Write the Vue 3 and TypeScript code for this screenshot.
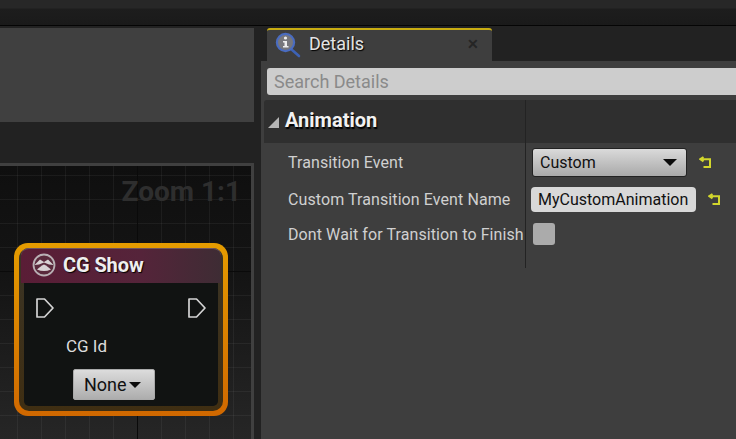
<script setup lang="ts">
const rows = [
  { label: 'Transition Event' },
  { label: 'Custom Transition Event Name' },
  { label: 'Dont Wait for Transition to Finish' },
]
</script>

<template>
  <div class="editor">
    <div class="topbar"></div>
    <div class="main">
      <div class="left">
        <div class="preview"></div>
        <div class="strip"></div>
        <div class="graph">
          <div class="zoom">Zoom 1:1</div>
          <div class="node">
            <div class="node-inner">
              <div class="node-head">
                <svg class="cg-icon" width="24" height="24" viewBox="0 0 24 24">
                  <circle cx="12" cy="12" r="10.5" fill="#5a2a3c" stroke="#b9b0b4" stroke-width="1.8" />
                  <path d="M2.5 12 L8 6.5 L12 9 L16 6.5 L21.5 12 L17 11.5 L12 9.5 L7 11.5 Z" fill="#d8d2d4" />
                  <path d="M5 16.5 Q8 14 10 12.5 L12 11.5 L14 12.5 Q16 14 19 16.5 Q12 19.5 5 16.5 Z" fill="#d8d2d4" />
                </svg>
                <span class="node-title">CG Show</span>
              </div>
              <div class="node-body">
                <div class="pins">
                  <svg width="20" height="22" viewBox="0 0 20 22"><path d="M2 2 H9.5 L18 11 L9.5 20 H2 Z" fill="none" stroke="#d4d4d4" stroke-width="1.7" stroke-linejoin="round" /></svg>
                  <svg width="20" height="22" viewBox="0 0 20 22"><path d="M2 2 H9.5 L18 11 L9.5 20 H2 Z" fill="none" stroke="#d4d4d4" stroke-width="1.7" stroke-linejoin="round" /></svg>
                </div>
                <div class="pin-label">CG Id</div>
                <div class="none-btn">None<span class="caret small"></span></div>
              </div>
            </div>
          </div>
        </div>
      </div>
      <div class="right">
        <div class="tabs">
          <div class="tab">
            <svg class="info-icon" width="26" height="26" viewBox="0 0 26 26">
              <path d="M16 17 L24 24" stroke="#3d62b5" stroke-width="2.6" stroke-linecap="round" />
              <circle cx="10.5" cy="10.5" r="8.6" fill="#77777c" stroke="#4a6cc0" stroke-width="2.2" />
              <circle cx="10.5" cy="6" r="1.6" fill="#eee" />
              <path d="M8 9 H12 V14 H13.5 V15.5 H8 V14 H9.5 V10.5 H8 Z" fill="#eee" />
            </svg>
            <span class="tab-title">Details</span>
            <span class="tab-close">✕</span>
          </div>
        </div>
        <div class="panel">
          <div class="search">Search Details</div>
          <div class="category">
            <div class="cat-left">
              <span class="tri"></span>
              <span class="cat-title">Animation</span>
            </div>
          </div>
          <div class="props">
            <div class="prop" v-for="(row, i) in rows" :key="row.label">
              <div class="prop-label">{{ row.label }}</div>
              <div class="prop-value">
                <template v-if="i === 0">
                  <div class="combo"><span>Custom</span><span class="caret"></span></div>
                  <svg class="reset" width="13" height="13" viewBox="0 0 13 13"><path d="M4.5 1 L1.2 3.2 L4.5 5.4 M1.5 3.2 H11 V11 H4.5" fill="none" stroke="#d2d62c" stroke-width="2" /></svg>
                </template>
                <template v-else-if="i === 1">
                  <div class="textbox">MyCustomAnimation</div>
                  <svg class="reset" width="13" height="13" viewBox="0 0 13 13"><path d="M4.5 1 L1.2 3.2 L4.5 5.4 M1.5 3.2 H11 V11 H4.5" fill="none" stroke="#d2d62c" stroke-width="2" /></svg>
                </template>
                <div v-else class="check"></div>
              </div>
            </div>
            <div class="prop-tail"></div>
          </div>
        </div>
      </div>
    </div>
  </div>
</template>

<style>
html, body { margin: 0; background: #222; overflow: hidden; }
</style>

<style scoped>
.editor {
  width: 736px;
  height: 439px;
  display: flex;
  flex-direction: column;
  font-family: Roboto, "Open Sans", sans-serif;
  background: #222;
  overflow: hidden;
}
.topbar {
  height: 25px;
  flex: none;
  background: linear-gradient(#272727 0, #272727 8px, #1d1d1d 9px, #1a1a1a 100%);
  border-bottom: 1px solid #050505;
}
.main { flex: 1; display: flex; min-height: 0; }
.left {
  width: 254px;
  flex: none;
  padding-top: 2px;
  display: flex;
  flex-direction: column;
}
.preview { height: 94px; background: #404040; flex: none; }
.strip { height: 41px; background: #222; flex: none; }
.graph {
  flex: 1;
  position: relative;
  border-top: 3px solid #404040;
  border-right: 3px solid #404040;
  background-image:
    linear-gradient(90deg, #0a0a0a 1px, transparent 1px),
    linear-gradient(#0a0a0a 1px, transparent 1px),
    linear-gradient(90deg, rgba(255, 255, 255, 0.05) 1px, transparent 1px),
    linear-gradient(rgba(255, 255, 255, 0.05) 1px, transparent 1px),
    linear-gradient(#0f0f0f 0, #141414 40%, #262626 100%);
  background-size: 192px 192px, 192px 192px, 24px 24px, 24px 24px, 100% 100%;
  background-position: 137px 0, 0 105px, 17px 0, 0 9px, 0 0;
}
.zoom {
  position: absolute;
  top: 9px;
  right: 10px;
  font-size: 28px;
  font-weight: 700;
  line-height: 34px;
  color: #2e2e2e;
}
.node {
  position: absolute;
  left: 14px;
  top: 77px;
  width: 214px;
  height: 173px;
  box-sizing: border-box;
  padding: 5px 5px;
  border-radius: 14px;
  background: linear-gradient(#e59c00, #d06800);
}
.node-inner {
  height: 100%;
  box-sizing: border-box;
  border-radius: 10px;
  background: linear-gradient(#3a3426, #3f2e12);
  padding: 0 2px 5px;
  display: flex;
  flex-direction: column;
}
.node-head {
  height: 35px;
  flex: none;
  display: flex;
  align-items: center;
  gap: 7px;
  padding: 0 0 2px 11px;
  border-radius: 8px 8px 0 0;
  background: linear-gradient(90deg, #5a1d36 0, #55243a 60%, #3e2c34 100%);
  border-top: 1px solid #6d5560;
  box-sizing: border-box;
}
.node-title {
  font-size: 20px;
  font-weight: 700;
  letter-spacing: -0.1px;
  color: #efefef;
  text-shadow: 1px 1px 1px #000;
}
.node-body {
  flex: 1;
  margin: 0 3px;
  background: #111312;
  border-radius: 0 0 5px 5px;
}
.pins {
  display: flex;
  justify-content: space-between;
  padding: 14px 11px 0 11px;
}
.pins svg { display: block; }
.pin-label {
  margin: 17px 0 0 42px;
  font-size: 17px;
  line-height: 20px;
  color: #ddd;
}
.none-btn {
  margin: 13px 0 0 49px;
  width: 82px;
  height: 31px;
  box-sizing: border-box;
  border-radius: 2px;
  border: 1px solid #aaa;
  background: linear-gradient(#dcdcdc, #adadad);
  color: #111;
  font-size: 18px;
  display: flex;
  align-items: center;
  padding-left: 10px;
  gap: 2px;
}
.caret {
  width: 0;
  height: 0;
  border-left: 7px solid transparent;
  border-right: 7px solid transparent;
  border-top: 7px solid #0c0c0c;
}
.caret.small {
  border-left-width: 6px;
  border-right-width: 6px;
  border-top-width: 6px;
}
.right {
  flex: 1;
  min-width: 0;
  padding-left: 7px;
  padding-top: 2px;
  display: flex;
  flex-direction: column;
}
.tabs { height: 33px; flex: none; padding-left: 6px; }
.tab {
  width: 225px;
  height: 33px;
  box-sizing: border-box;
  border-top: 2px solid #c9ad12;
  border-radius: 3px 3px 0 0;
  background: #3e3e3e;
  display: flex;
  align-items: center;
  position: relative;
  padding-left: 8px;
}
.info-icon { margin-top: -2px; }
.tab-title {
  margin: -4px 0 0 8px;
  font-size: 18px;
  color: #e4e4e4;
  text-shadow: 1px 1px 1px #000;
}
.tab-close {
  position: absolute;
  right: 13px;
  top: 6px;
  font-size: 14px;
  font-weight: 700;
  color: #252525;
}
.panel { flex: 1; background: #3e3e3e; padding-top: 7px; }
.search {
  margin-left: 6px;
  height: 27px;
  box-sizing: border-box;
  border-radius: 3px 0 0 3px;
  background: #cdcdcd;
  color: #8a8a8a;
  font-size: 18px;
  line-height: 27px;
  padding-left: 7px;
}
.category {
  margin: 5px 0 0 3px;
  height: 43px;
  background: #2f2f2f;
  border-radius: 3px 0 0 0;
}
.cat-left {
  width: 262px;
  height: 100%;
  box-sizing: border-box;
  border-right: 1px solid #232323;
  display: flex;
  align-items: center;
  padding: 0 0 4px 4px;
  gap: 6px;
}
.tri {
  width: 0;
  height: 0;
  border-left: 11px solid transparent;
  border-bottom: 11px solid #b5b5b5;
  margin-top: 6px;
}
.cat-title {
  font-size: 20px;
  font-weight: 700;
  color: #f2f2f2;
  text-shadow: 1px 2px 1px #000;
}
.props { margin-left: 3px; }
.prop { display: flex; height: 36px; align-items: center; }
.prop:nth-child(1) { height: 38px; }
.prop:nth-child(3) { height: 34px; }
.prop-label {
  width: 262px;
  box-sizing: border-box;
  padding-left: 24px;
  height: 100%;
  display: flex;
  align-items: center;
  border-right: 1px solid #232323;
  font-size: 16px;
  letter-spacing: 0.09px;
  color: #d0d0d0;
  white-space: nowrap;
}
.prop-tail {
  width: 262px;
  height: 17px;
  box-sizing: border-box;
  border-right: 1px solid #232323;
}
.prop-value {
  flex: 1;
  display: flex;
  align-items: center;
  padding-left: 6px;
}
.combo {
  width: 155px;
  height: 29px;
  box-sizing: border-box;
  border: 1px solid #222;
  border-radius: 3px;
  background: linear-gradient(#dadada, #a9a9a9);
  color: #111;
  font-size: 16px;
  display: flex;
  align-items: center;
  justify-content: space-between;
  padding: 0 9px 0 7px;
}
.textbox {
  width: 165px;
  height: 25px;
  box-sizing: border-box;
  margin-left: -1px;
  border-radius: 4px;
  background: #d8d8d8;
  color: #111;
  font-size: 16px;
  line-height: 25px;
  padding-left: 7px;
  white-space: nowrap;
}
.reset { margin-left: 12px; }
.check {
  width: 22px;
  height: 22px;
  margin-left: 1px;
  border-radius: 3px;
  background: #ababab;
}
</style>
